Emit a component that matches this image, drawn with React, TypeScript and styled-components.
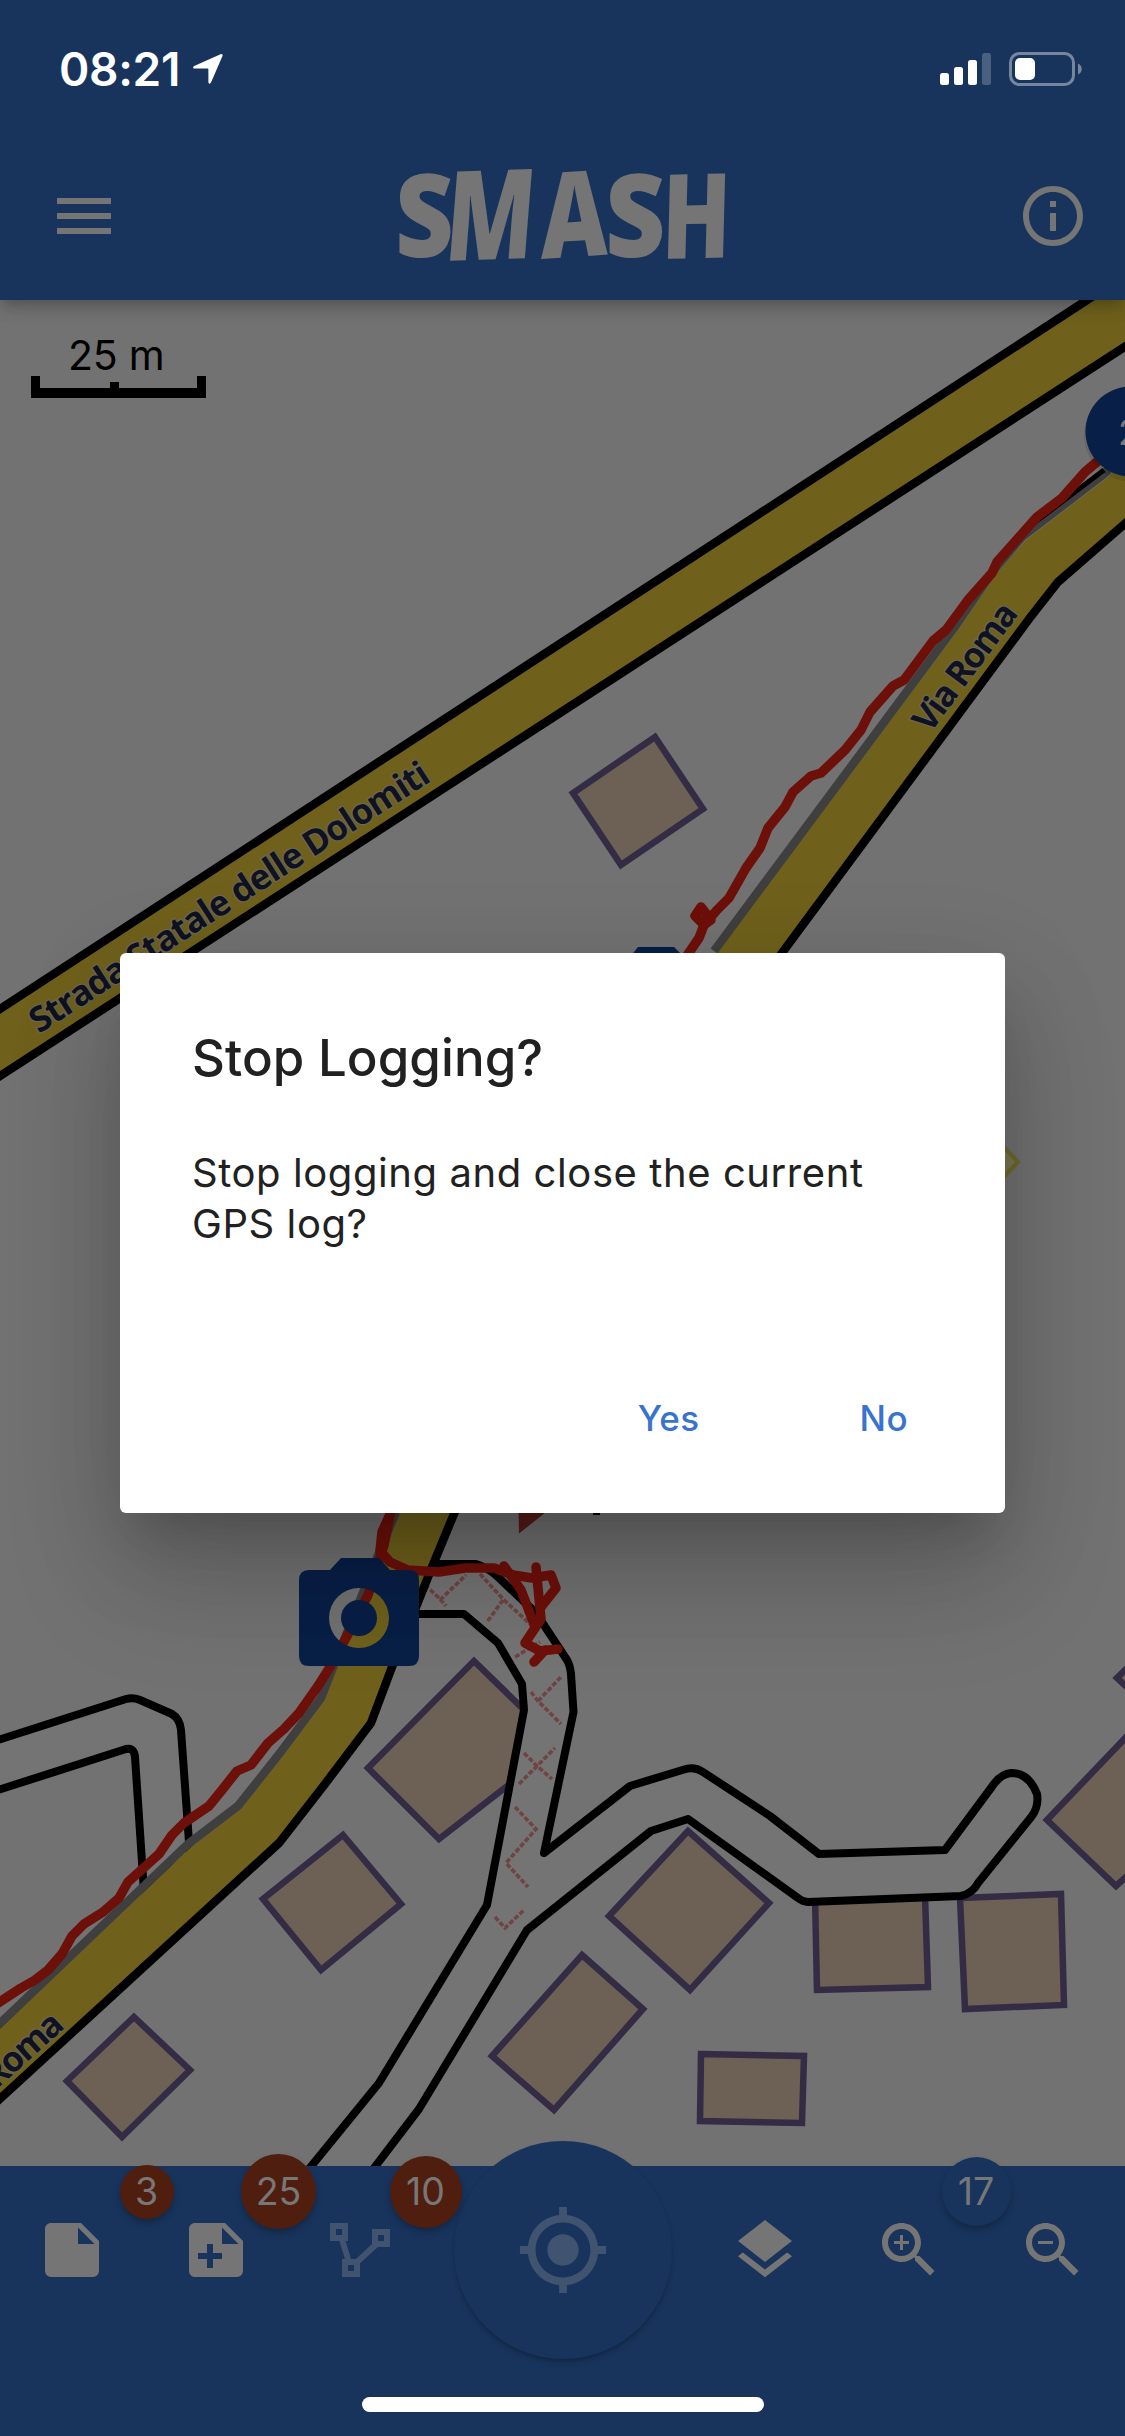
import React from "react";
import styled, { createGlobalStyle } from "styled-components";

const color = {
  bar: "#18345c",
  map: "#727272",
  lane: "#747474",
  road: "#6f611c",
  ink: "#757575",
  building: "#6d6155",
  buildingEdge: "#342c44",
  track: "#6e100a",
  marker: "#081f47",
  badge: "#501e0e",
  accent: "#3873ce",
};

const GlobalStyle = createGlobalStyle`
  * { box-sizing: border-box; }
  body { margin: 0; background: ${color.bar}; }
`;

const Screen = styled.div`
  position: relative;
  display: flex;
  flex-direction: column;
  width: 1125px;
  height: 2436px;
  overflow: hidden;
  background: ${color.bar};
  font-family: Inter, Roboto, "Liberation Sans", sans-serif;
`;

const Header = styled.header`
  position: relative;
  z-index: 1;
  flex: none;
  height: 300px;
  background: ${color.bar};
  box-shadow: 0 6px 12px -3px rgba(0, 0, 0, 0.2), 0 12px 15px rgba(0, 0, 0, 0.07),
    0 3px 30px rgba(0, 0, 0, 0.06);
`;

const StatusBar = styled.div`
  display: flex;
  align-items: center;
  justify-content: space-between;
  height: 132px;
  padding: 6px 42px 0 59px;
  color: #fff;
`;

const StatusGroup = styled.div<{ $gap: number }>`
  display: flex;
  align-items: center;
  gap: ${(p) => p.$gap}px;
`;

const Clock = styled.span`
  font-size: 46px;
  font-weight: 600;
  line-height: 54px;
  letter-spacing: -0.3px;
`;

const AppBar = styled.div`
  display: flex;
  align-items: center;
  justify-content: space-between;
  height: 168px;
  padding: 0 36px 0 48px;
`;

const MapArea = styled.main`
  position: relative;
  flex: none;
  height: 1866px;
  background: ${color.map};
`;

const MapCanvas = styled.svg`
  display: block;
`;

const ScaleBar = styled.div`
  position: absolute;
  left: 31px;
  top: 34px;
  display: flex;
  flex-direction: column;
  align-items: flex-start;
  width: 175px;
  color: #000;
`;

const ScaleLabel = styled.span`
  padding-left: 37px;
  font-size: 41px;
  line-height: 42px;
  letter-spacing: -0.2px;
`;

const BottomBar = styled.footer`
  position: relative;
  flex: none;
  height: 270px;
  background: ${color.bar};
`;

const Tools = styled.nav`
  display: flex;
  align-items: center;
  justify-content: space-between;
  height: 168px;
  padding: 0 36px;
`;

const Tool = styled.button<{ $dim?: boolean }>`
  position: relative;
  display: flex;
  padding: 0;
  border: 0;
  background: none;
  color: ${(p) => (p.$dim ? "#40536f" : color.ink)};
`;

const Locate = styled.button`
  display: flex;
  align-items: center;
  justify-content: center;
  flex: none;
  width: 218px;
  height: 218px;
  margin: 0 -14.5px;
  padding: 0;
  border: 0;
  border-radius: 50%;
  background: ${color.bar};
  color: #40536f;
  box-shadow: 0 5px 6px -2px rgba(0, 0, 0, 0.24), 0 1px 3px rgba(0, 0, 0, 0.1);
`;

const Badge = styled.span<{ $size: number; $dx: number; $tone?: string }>`
  position: absolute;
  left: ${(p) => 36 + p.$dx - p.$size / 2}px;
  top: ${(p) => -22.5 - p.$size / 2}px;
  display: flex;
  align-items: center;
  justify-content: center;
  width: ${(p) => p.$size}px;
  height: ${(p) => p.$size}px;
  border-radius: 50%;
  background: ${(p) => p.$tone ?? color.badge};
  color: #777;
  font-family: Inter, sans-serif;
  font-size: 37.5px;
  line-height: 38px;
  box-shadow: 0 4px 6px rgba(0, 0, 0, 0.25);
`;

const HomeIndicator = styled.div`
  width: 402px;
  height: 15px;
  margin: 63px auto 0;
  border-radius: 8px;
  background: #fff;
`;

const Dialog = styled.section`
  position: absolute;
  z-index: 2;
  left: 120px;
  top: 953px;
  display: flex;
  flex-direction: column;
  width: 885px;
  height: 560px;
  padding: 75px 72px 0;
  border-radius: 6px;
  background: #fff;
  color: #212121;
  box-shadow: 0 33px 45px -21px rgba(0, 0, 0, 0.16), 0 66px 114px 6px rgba(0, 0, 0, 0.16),
    0 27px 110px 10px rgba(0, 0, 0, 0.08);
`;

const DialogTitle = styled.h1`
  margin: 0;
  font-size: 51px;
  font-weight: 500;
  line-height: 60px;
  letter-spacing: 0.05px;
`;

const DialogText = styled.p`
  margin: 59px 0 0;
  font-size: 40px;
  line-height: 51px;
  letter-spacing: 0.58px;
  white-space: nowrap;
`;

const DialogActions = styled.div`
  display: flex;
  justify-content: flex-end;
  gap: 160px;
  margin-top: 148px;
  padding-right: 25px;
`;

const DialogButton = styled.button`
  padding: 0;
  border: 0;
  background: none;
  color: ${color.accent};
  font: 500 35px/42px Inter, sans-serif;
  letter-spacing: 0.4px;
`;

const Glyph = ({ d, size = 72 }: { d: string; size?: number }) => (
  <svg width={size} height={size} viewBox="0 0 24 24" fill="currentColor" fillRule="evenodd">
    <path d={d} />
  </svg>
);

const icons = {
  menu: "M3 18h18v-2H3v2zm0-5h18v-2H3v2zm0-7v2h18V6H3z",
  info: "M11 7h2v2h-2zm0 4h2v6h-2zm1-9C6.48 2 2 6.48 2 12s4.48 10 10 10 10-4.48 10-10S17.52 2 12 2zm0 18c-4.41 0-8-3.59-8-8s3.59-8 8-8 8 3.59 8 8-3.59 8-8 8z",
  note: "M14 10V4.5L19.5 10M5 3C3.89 3 3 3.89 3 5V19A2 2 0 0 0 5 21H19A2 2 0 0 0 21 19V9L15 3H5Z",
  notePlus:
    "M14 10H19.5L14 4.5V10M5 3H15L21 9V19A2 2 0 0 1 19 21H5C3.89 21 3 20.1 3 19V5C3 3.89 3.89 3 5 3M9 18H11V15H14V13H11V10H9V13H6V15H9V18Z",
  polyline:
    "M2 3H8V9H7.2L9 15H10.6L16 10V5H22V11H18L12 16.4V21H6V15H7L5.1 9H2ZM4 5V7H6V5ZM18 7V9H20V7ZM8 17V19H10V17Z",
  gps: "M12 8c-2.21 0-4 1.79-4 4s1.79 4 4 4 4-1.79 4-4-1.79-4-4-4zm8.94 3c-.46-4.17-3.77-7.48-7.94-7.94V1h-2v2.06C6.83 3.52 3.52 6.83 3.06 11H1v2h2.06c.46 4.17 3.77 7.48 7.94 7.94V23h2v-2.06c4.17-.46 7.48-3.77 7.94-7.94H23v-2h-2.06zM12 19c-3.87 0-7-3.13-7-7s3.13-7 7-7 7 3.13 7 7-3.13 7-7 7z",
  layers:
    "M11.99 18.54l-7.37-5.73L3 14.07l9 7 9-7-1.63-1.27-7.38 5.74zM12 16l7.36-5.73L21 9l-9-7-9 7 1.63 1.27L12 16z",
  zoomIn:
    "M15.5 14h-.79l-.28-.27C15.41 12.59 16 11.11 16 9.5 16 5.91 13.09 3 9.5 3S3 5.91 3 9.5 5.91 16 9.5 16c1.61 0 3.09-.59 4.23-1.57l.27.28v.79l5 4.99L20.49 19l-4.99-5zm-6 0C7.01 14 5 11.99 5 9.5S7.01 5 9.5 5 14 7.01 14 9.5 11.99 14 9.5 14zM12 10h-2v2H9v-2H7V9h2V7h1v2h2v1z",
  zoomOut:
    "M15.5 14h-.79l-.28-.27C15.41 12.59 16 11.11 16 9.5 16 5.91 13.09 3 9.5 3S3 5.91 3 9.5 5.91 16 9.5 16c1.61 0 3.09-.59 4.23-1.57l.27.28v.79l5 4.99L20.49 19l-4.99-5zm-6 0C7.01 14 5 11.99 5 9.5S7.01 5 9.5 5 14 7.01 14 9.5 11.99 14 9.5 14zM7 9h5v1H7z",
};

const letters = [
  { ch: "S", m: "matrix(1.02 0 0 1.15 395 257)" },
  { ch: "M", m: "matrix(0.92 -0.03 -0.1 1.25 443 261)" },
  { ch: "A", m: "matrix(0.92 -0.06 0 1.19 541 259)" },
  { ch: "S", m: "matrix(1.05 0 0 1.15 605 257)" },
  { ch: "H", m: "matrix(0.9 -0.02 -0.03 1.18 661 259)" },
];

const Logo = () => (
  <svg width="365" height="168" viewBox="386 132 365 168" fill={color.ink}>
    {letters.map((l, i) => (
      <text
        key={i}
        transform={l.m}
        fontFamily="'Open Sans', sans-serif"
        fontWeight="800"
        fontSize="100"
      >
        {l.ch}
      </text>
    ))}
  </svg>
);

const Signal = () => (
  <svg width="51" height="34" viewBox="0 0 51 34" fill="#fff">
    <rect x="0" y="21" width="9" height="12" rx="2.5" />
    <rect x="14" y="15" width="9" height="18" rx="2.5" />
    <rect x="28" y="8" width="9" height="25" rx="2.5" />
    <rect x="42" y="1" width="9" height="32" rx="2.5" opacity="0.22" />
  </svg>
);

const Battery = () => (
  <svg width="74" height="34" viewBox="0 0 74 34">
    <rect x="1.5" y="1.5" width="63" height="31" rx="9" fill="none" stroke="#76869d" strokeWidth="3" />
    <rect x="6" y="6" width="20" height="22" rx="5" fill="#fff" />
    <path d="M69 11.5c5 2 5 9 0 11z" fill="#76869d" />
  </svg>
);

const LocationArrow = () => (
  <svg width="32" height="32" viewBox="0 0 32 32" fill="#fff">
    <path d="M28.5 1.2c1.4-.5 2.5.5 2 1.900L19 29.500c-.8 1.700-2.600 1.400-2.600-.4V16.300c0-.5-.2-.7-.7-.7H2.700c-1.800 0-2.200-1.900-.5-2.700z" />
  </svg>
);

const buildings = [
  "655,737 703,809 621,865 573,793",
  "474,1661 560,1745 439,1839 368,1768",
  "343,1835 401,1904 321,1970 263,1899",
  "134,2017 190,2070 122,2137 67,2081",
  "582,1955 643,2009 554,2110 492,2056",
  "688,1831 769,1903 690,1990 609,1916",
  "815,1896 925,1896 928,1987 817,1990",
  "960,1898 1061,1894 1064,2005 965,2009",
  "701,2054 804,2056 802,2123 700,2121",
  "1150,1712 1047,1820 1116,1886 1150,1855",
  "1150,1645 1117,1678 1150,1708",
];

const lanePaths = [
  "M-5 1741L126 1699Q133 1697 140 1700L172 1714Q180 1719 181 1730L190 1856L144 1892L135 1757Q134 1747 126 1749L-5 1791Z",
  "M400 1564H476Q487 1567 498 1577L536 1613L567 1660Q570 1665 571 1674L573.5 1712L544 1853L630 1786L684 1769.5Q694 1766 703 1772L770 1816L819 1854L945 1850L991 1788Q1000 1774 1011 1773Q1029 1773 1037 1794Q1039 1806 1032 1816L978 1883Q973 1893 961 1896L808 1902Q803 1902 798 1898L688 1819L651 1831L527 1930L419 2109L365 2180L300 2180L379 2083L487 1905L524 1710L522 1684L498 1643L464 1614H400Z",
];

const crosses =
  "M420 1580L440 1599L446 1606M440 1600L466 1575M480 1574L503 1599L531 1625M503 1600L487 1622M515 1657L540 1642M531 1692L538 1701L561 1724M538 1701L561 1677M524 1753L537 1766L552 1779M519 1784L537 1766L555 1748M515 1807L536 1829L506 1863L528 1887M495 1917L505 1928L524 1910";

const upperTrack =
  "1125,448 1098,461 1085,472 1062,498 1037,517 997,562 992,573 968,600 946,630 933,641 904,680 893,686 870,712 861,730 845,750 821,773 811,776 793,792 785,807 768,828 760,848 746,868 729,898 717,910 704,925 699,938 686,957";

const lowerTracks = [
  "391,1512 382,1532 380,1551 390,1562 408,1570 439,1572 465,1568 494,1568 513,1575 532,1578 551,1575 556,1588 541,1607",
  "536,1567 541,1619 525,1643 540,1651 558,1649",
  "545,1650 534,1662",
  "504,1566 521,1590 534,1624",
  "390,1515 384,1545 368,1595 346,1638 330,1667 318,1686 299,1713 284,1729 268,1743 251,1765 237,1771 222,1790 209,1806 184,1823 172,1835 159,1854 128,1882 119,1898 103,1912 84,1924 72,1936 62,1954 48,1970 35,1980 21,1988 -5,2005",
];

const MapView = () => (
  <MapCanvas width="1125" height="1866" viewBox="0 300 1125 1866">
    <g fill={color.building} stroke={color.buildingEdge} strokeWidth="6.5">
      {buildings.map((b) => (
        <polygon key={b} points={b} />
      ))}
    </g>
    <g fill={color.lane} stroke="#000" strokeWidth="8" strokeLinejoin="round">
      {lanePaths.map((d) => (
        <path key={d} d={d} />
      ))}
    </g>
    <path d={crosses} fill="none" stroke="#6f4543" strokeWidth="3.6" strokeDasharray="5 2" />

    <polygon
      points="-20,1022 1107,287 1240,272 -20,1089"
      fill={color.road}
      stroke="#000"
      strokeWidth="8.5"
    />
    <polygon
      points="1135,450 1108,477 1026,540 997,573 958,630 717,953 400,1513 385,1548 337,1667 325,1699 283,1756 241,1809 191,1847 -10,2038 -10,2108 279,1843 325,1784 371,1723 392,1667 432,1567 455,1512 782,953 1026,620 1058,582 1135,514"
      fill={color.road}
    />
    <g fill="none" strokeWidth="8.5">
      <polyline
        points="1128,450 1104,474 1022,537 993,571 954,628 714,951"
        stroke="#3f3f3f"
      />
      <polyline
        points="396,1512 381,1548 334,1665 321,1698 280,1753 238,1806 188,1844 -10,2033"
        stroke="#3f3f3f"
      />
      <polyline points="1104,470 1030,526 1000,558" stroke="#000" strokeWidth="5" />
      <polyline points="1135,515 1058,582 1029,619 779,957" stroke="#000" />
      <polyline
        points="456,1509 432,1567 392,1667 371,1723 325,1784 279,1843 -10,2108"
        stroke="#000"
      />
    </g>

    <g
      fontFamily="'Open Sans', 'Noto Sans', sans-serif"
      fontWeight="700"
      fontSize="35"
      fill="#10131f"
      stroke="#6b6960"
      strokeWidth="2"
      paintOrder="stroke"
    >
      <text transform="translate(39 1034) rotate(-32.8)" textLength="468">
        Strada Statale delle Dolomiti
      </text>
      <text transform="translate(930 734) rotate(-53.5)" textLength="150">
        Via Roma
      </text>
      <text transform="translate(66 2027) rotate(-42)" textAnchor="end" textLength="150">
        Via Roma
      </text>
    </g>

    <path d="M998 1141L1018 1162L998 1183" fill="#797754" stroke="#6f6a2c" strokeWidth="4" />
    <g fill="none" stroke={color.track} strokeWidth="9.5" strokeLinecap="round" strokeLinejoin="round">
      <polyline points={upperTrack} />
      <path d="M704 925L695 916L701 907L711 920Z" />
      {lowerTracks.map((t) => (
        <polyline key={t} points={t} />
      ))}
    </g>
    <path d="M518.5 1512H546L519 1533.5Z" fill="#571d19" />
    <rect x="593" y="1512" width="7" height="3" fill="#000" />

    <path d="M630 957L638 947H674L684 957Z" fill={color.marker} />
    <path
      fill={color.marker}
      fillRule="evenodd"
      d="M309 1570H330L341 1558H379L390 1570H409Q419 1570 419 1580V1656Q419 1666 409 1666H309Q299 1666 299 1656V1580Q299 1570 309 1570ZM359 1588A30 30 0 1 0 359 1648A30 30 0 1 0 359 1588ZM359 1600A18 18 0 1 1 359 1636A18 18 0 1 1 359 1600Z"
    />
    <circle cx="1130.5" cy="435" r="46.5" fill="#000" opacity="0.1" />
    <circle cx="1130.5" cy="431.5" r="45" fill={color.marker} />
    <text x="1118" y="445" fontFamily="Inter, sans-serif" fontSize="36" fill="#777">
      2
    </text>
  </MapCanvas>
);

export default function App() {
  return (
    <>
      <GlobalStyle />
      <Screen>
        <Header>
          <StatusBar>
            <StatusGroup $gap={12}>
              <Clock>08:21</Clock>
              <LocationArrow />
            </StatusGroup>
            <StatusGroup $gap={18}>
              <Signal />
              <Battery />
            </StatusGroup>
          </StatusBar>
          <AppBar>
            <Tool>
              <Glyph d={icons.menu} />
            </Tool>
            <Logo />
            <Tool>
              <Glyph d={icons.info} />
            </Tool>
          </AppBar>
        </Header>

        <MapArea>
          <MapView />
          <ScaleBar>
            <ScaleLabel>25 m</ScaleLabel>
            <svg width="175" height="22" viewBox="0 0 175 22">
              <path d="M0 0H9V12H79V6H88V12H166V0H175V22H0Z" />
            </svg>
          </ScaleBar>
        </MapArea>

        <BottomBar>
          <Tools>
            <Tool>
              <Glyph d={icons.note} />
              <Badge $size={54} $dx={74.5}>3</Badge>
            </Tool>
            <Tool>
              <Glyph d={icons.notePlus} />
              <Badge $size={75} $dx={62.5}>25</Badge>
            </Tool>
            <Tool $dim>
              <Glyph d={icons.polyline} />
              <Badge $size={72} $dx={65.5}>10</Badge>
            </Tool>
            <Locate>
              <Glyph d={icons.gps} size={94} />
            </Locate>
            <Tool>
              <Glyph d={icons.layers} />
            </Tool>
            <Tool>
              <Glyph d={icons.zoomIn} />
              <Badge $size={69} $dx={67} $tone={color.bar}>17</Badge>
            </Tool>
            <Tool>
              <Glyph d={icons.zoomOut} />
            </Tool>
          </Tools>
          <HomeIndicator />
        </BottomBar>

        <Dialog>
          <DialogTitle>Stop Logging?</DialogTitle>
          <DialogText>
            Stop logging and close the current
            <br />
            GPS log?
          </DialogText>
          <DialogActions>
            <DialogButton>Yes</DialogButton>
            <DialogButton>No</DialogButton>
          </DialogActions>
        </Dialog>
      </Screen>
    </>
  );
}
